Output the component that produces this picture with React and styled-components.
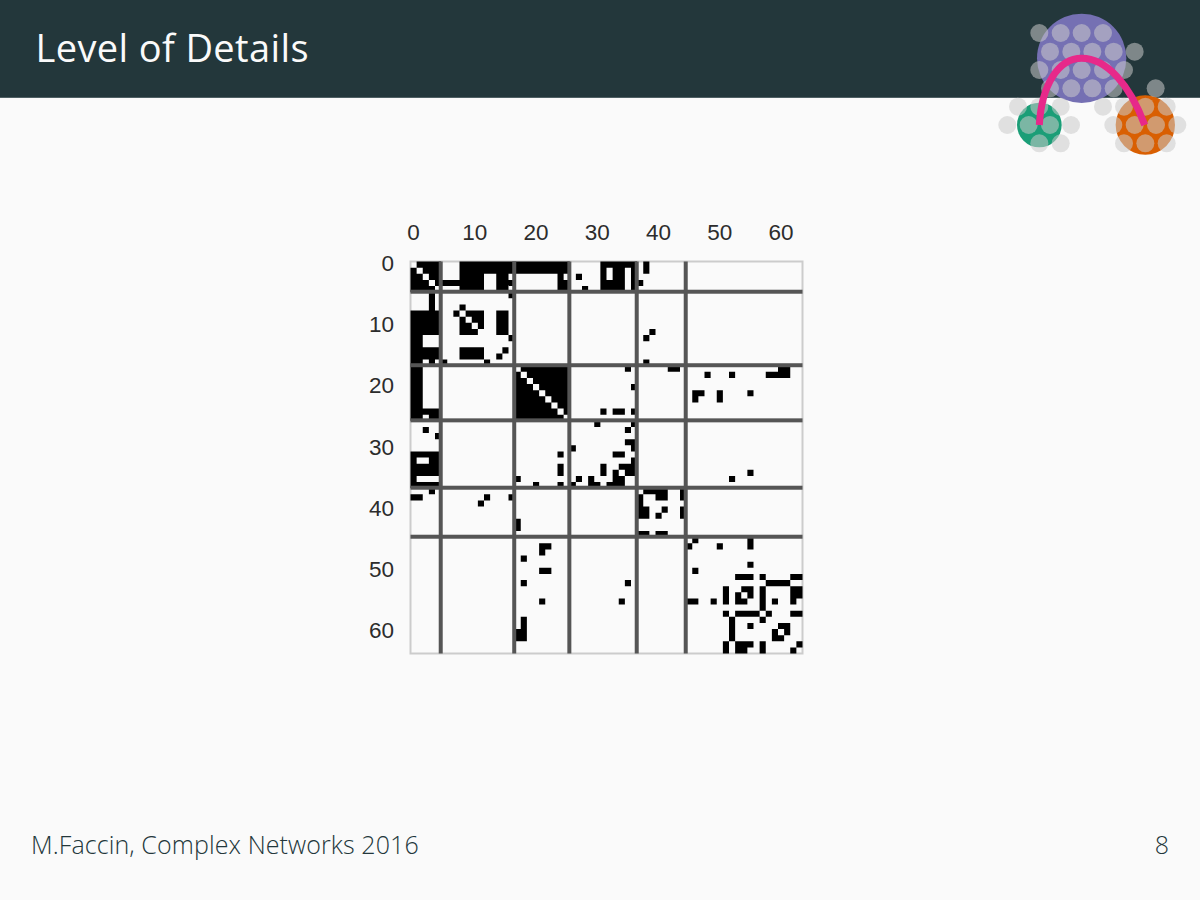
import React from 'react';
import styled, { createGlobalStyle } from 'styled-components';

const GlobalStyle = createGlobalStyle`
  html, body { margin: 0; padding: 0; background: #fafafa; }
`;

const Slide = styled.div`
  position: relative;
  width: 1200px;
  height: 900px;
  display: flex;
  flex-direction: column;
  overflow: hidden;
  background: #fafafa;
  font-family: "Open Sans", "Noto Sans", sans-serif;
  color: #23373b;
`;

const Header = styled.header`
  height: 98px;
  flex: none;
  box-sizing: border-box;
  padding: 22px 0 0 35.5px;
  background: #23373b;
  border-bottom: 1px solid #4f6064;
`;

const Title = styled.h1`
  margin: 0;
  font-size: 38px;
  line-height: 50px;
  font-weight: 400;
  letter-spacing: 0.38px;
  color: #fafafa;
`;

const Main = styled.main`
  flex: 1;
  padding: 117px 0 0 360px;
`;

const Footer = styled.footer`
  flex: none;
  height: 72px;
  display: flex;
  justify-content: space-between;
  padding: 0 31px;
  font-size: 25px;
  line-height: 32px;
  font-weight: 300;
  letter-spacing: 0.1px;
`;

const LogoBox = styled.div`
  position: absolute;
  top: 5px;
  left: 990px;
  width: 200px;
  height: 160px;
`;

// adjacency, upper triangle only: row -> columns, mirrored when drawn
const EDGES = {
  0: '1-4 8-25 31-36 38',
  1: '2-4 8-25 31 33 34 36 38',
  2: '3 4 8-11 14 15 24 27 31 33 34 36',
  3: '4-11 14-16 24 25 31-34 36 37',
  4: '8-11 14 15 24 25 28 31-34 36',
  5: '16',
  7: '8',
  8: '9-11 14 15',
  9: '10 11 14 15',
  10: '11 14 15',
  11: '14 15 39',
  12: '16 38',
  14: '15',
  16: '38',
  17: '18-25 35 42 43 60 61',
  18: '19-25 48 52 58-61',
  19: '20-25',
  20: '21-25 36',
  21: '22-25 46 47 50 55',
  22: '23-25 46 50',
  23: '24 25',
  24: '25 31 33 34 36',
  26: '30 36',
  27: '35',
  29: '35 36',
  30: '36',
  31: '33 34',
  32: '36',
  33: '34-36',
  34: '35 36 55',
  35: '52',
  37: '38-41 44',
  38: '40 41 44',
  40: '41 44',
  41: '44',
  45: '46 55',
  46: '50 55',
  49: '55',
  51: '53-55 57 62 63',
  52: '58-61',
  53: '54 55 57 62 63',
  54: '55 57 62 63',
  55: '57 59 62',
  56: '57',
  57: '58 62 63',
  59: '60 61',
  60: '61',
  62: '63',
};

const X0 = 410.5;
const Y0 = 261.5;
const CELL = 6.125;
const SIZE = CELL * 64;
const GROUPS = [5, 17, 26, 37, 45];
const TICKS = [0, 10, 20, 30, 40, 50, 60];

const cellsPath = () => {
  let d = '';
  const add = (r, c) => {
    d += `M${X0 + c * CELL} ${Y0 + r * CELL}h${CELL}v${CELL}h${-CELL}z`;
  };
  Object.entries(EDGES).forEach(([row, cols]) => {
    cols.split(' ').forEach((part) => {
      const [a, b = a] = part.split('-').map(Number);
      for (let c = a; c <= b; c++) {
        add(Number(row), c);
        add(c, Number(row));
      }
    });
  });
  return d;
};

const Tick = styled.text`
  font-family: "Liberation Sans", Arial, sans-serif;
  font-size: 22.5px;
  fill: #2c2c2c;
`;

const Matrix = () => (
  <svg width="450" height="445" viewBox="360 215 450 445" style={{ display: 'block' }}>
    <rect x={X0} y={Y0} width={SIZE} height={SIZE} fill="none" stroke="#cccccc" strokeWidth="2" />
    <path d={cellsPath()} fill="#000" />
    {GROUPS.map((g) => (
      <React.Fragment key={g}>
        <rect x={X0 + g * CELL - 2.4} y={Y0} width="4" height={SIZE} fill="#555" />
        <rect x={X0} y={Y0 + g * CELL - 2.4} width={SIZE} height="4" fill="#555" />
      </React.Fragment>
    ))}
    {TICKS.map((t) => (
      <React.Fragment key={t}>
        <Tick x={X0 + (t + 0.5) * CELL} y="240" textAnchor="middle">{t}</Tick>
        <Tick x="394" y={Y0 + (t + 0.5) * CELL + 6.2} textAnchor="end">{t}</Tick>
      </React.Fragment>
    ))}
  </svg>
);

const DOTS = [
  [148, 84], [212, 84], [275, 84], [339, 84],
  [180, 140], [244, 140], [307, 140], [371, 140], [434, 140],
  [148, 195], [212, 195], [275, 195], [339, 195], [402, 195],
  [180, 250], [244, 250], [307, 250], [371, 250], [497, 250],
  [84, 305], [148, 305], [212, 305], [339, 305], [402, 305], [466, 305], [530, 305],
  [52, 360], [116, 360], [180, 360], [243, 360], [370, 360], [434, 360], [498, 360], [562, 360],
  [148, 415], [212, 415], [402, 415], [466, 415], [530, 415],
];

const Logo = () => (
  <LogoBox>
    <svg width="200" height="160" viewBox="0 0 600 480">
      <circle cx="275" cy="160" r="134" fill="#7570b3" />
      <circle cx="148" cy="360" r="67" fill="#1b9e77" />
      <circle cx="466" cy="360" r="89" fill="#d95f02" />
      {DOTS.map(([x, y]) => (
        <circle key={`${x}-${y}`} cx={x} cy={y} r="27" fill="#cacaca" fillOpacity="0.55" />
      ))}
      <path
        d="M148 360C155 240 205 160 275 160C350 160 420 240 464 360"
        fill="none"
        stroke="#e7298a"
        strokeWidth="21"
      />
    </svg>
  </LogoBox>
);

const App = () => (
  <Slide>
    <GlobalStyle />
    <Header>
      <Title>Level of Details</Title>
    </Header>
    <Main>
      <Matrix />
    </Main>
    <Footer>
      <span>M.Faccin, Complex Networks 2016</span>
      <span>8</span>
    </Footer>
    <Logo />
  </Slide>
);

export default App;
